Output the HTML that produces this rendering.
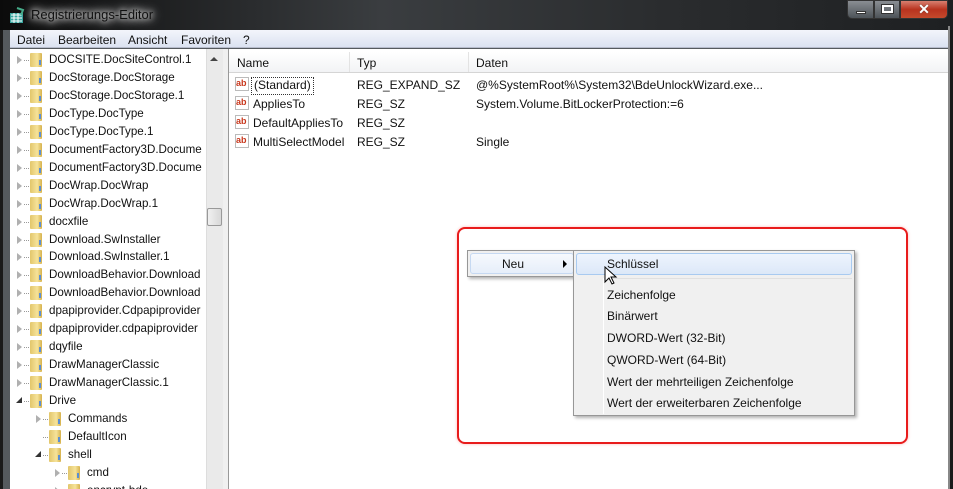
<!DOCTYPE html>
<html><head><meta charset="utf-8"><style>
*{margin:0;padding:0;box-sizing:border-box}
html{width:953px;height:489px;overflow:hidden}
body{width:953px;height:489px;overflow:hidden;background:#1a1a1a;font-family:"Liberation Sans",sans-serif;font-size:12px;color:#111;position:relative}
.title{position:absolute;left:0;top:0;width:953px;height:30px;background:linear-gradient(90deg,#0b0b0b 0,#3a3d40 40%,#2a2c2e 70%,#1e2022 100%)}
.title .t{position:absolute;left:31px;top:7px;color:#111;font-size:13px;text-shadow:0 0 6px #fff,0 0 10px #fff,0 0 14px #ccc}
.frame{position:absolute;left:3px;top:26px;width:947px;height:463px;background:#555a5e}
.menu{position:absolute;left:10px;top:30px;width:939px;height:18px;background:linear-gradient(#f3f5fb,#dbe2f1);border-bottom:1px solid #b6bccc}
.menu span{position:absolute;top:3px;font-size:12px}
.tree{position:absolute;left:10px;top:49px;width:197px;height:440px;background:#fff;overflow:hidden}
.sb{position:absolute;left:206px;top:49px;width:17px;height:440px;background:#eaeaea;border-left:1px solid #ddd}
.thumb{position:absolute;left:207px;top:208px;width:15px;height:18px;background:linear-gradient(90deg,#f0f0f0,#d8d8d8);border:1px solid #999;border-radius:2px}
.split{position:absolute;left:223px;top:49px;width:6px;height:440px;background:#f0f0f0;border-right:1px solid #999}
.right{position:absolute;left:229px;top:49px;width:719px;height:440px;background:#fff}
.rframe{position:absolute;left:948px;top:26px;width:2px;height:463px;background:#888}
.hdr{position:absolute;left:229px;top:52px;width:719px;height:21px;background:linear-gradient(#fff,#f2f3f5);border-bottom:1px solid #d5d5d5}
.hdr span{position:absolute;top:4px}
.row{position:absolute;height:18px;white-space:nowrap}
.tree .row{font-size:11.6px}
.tri{position:absolute;width:0;height:0;border-top:4px solid transparent;border-bottom:4px solid transparent;border-left:5px solid #b0b0b0}
.fold{position:absolute;width:12px;height:14px;background:linear-gradient(90deg,#e2c66b,#f6e39a 60%,#d6b24d);border-radius:1px}
.fold:after{content:"";position:absolute;right:1px;top:7px;width:2px;height:5px;background:#5b8fd4}
.ab{position:absolute;left:235px;width:14px;height:14px;border:1px solid #bbb;background:#fff;color:#c8371c;font-weight:bold;font-size:9px;line-height:10px;text-align:left}
.red{position:absolute;left:457px;top:227px;width:451px;height:217px;border:2px solid #e81c1c;border-radius:8px;background:#fff;box-shadow:0 0 3px #fbb}
.m1{position:absolute;left:467px;top:250px;width:108px;height:27px;background:#f0f0f0;border:1px solid #979797;box-shadow:2px 2px 3px rgba(0,0,0,.3)}
.m1 .hl{position:absolute;left:2px;top:2px;width:104px;height:21px;border:1px solid #c6d9f2;border-radius:3px;background:linear-gradient(#f6f9fd,#e6eefa)}
.m2{position:absolute;left:573px;top:250px;width:282px;height:166px;background:#f0f0f0;border:1px solid #979797;box-shadow:2px 2px 3px rgba(0,0,0,.3)}
.m2 .hl{position:absolute;left:2px;top:2px;width:276px;height:22px;border:1px solid #a8caf0;border-radius:3px;background:linear-gradient(#eef4fd,#dce8f8)}
.m2 .gut{position:absolute;left:29px;top:27px;width:1px;height:136px;background:#e0e0e0;border-right:1px solid #fff}
.m2 .sep{position:absolute;left:30px;top:27px;width:248px;height:1px;background:#e0e0e0}
.m2 span{position:absolute;left:33px}
</style></head><body>
<div class="frame"></div>
<div class="title"><svg style="position:absolute;left:9px;top:7px" width="17" height="17"><rect x="1" y="6" width="13" height="10" fill="#3aa6a0"/><path d="M2 8h11M2 11h11M2 14h11M5 6v10M9 6v10" stroke="#fff" stroke-width="1"/><path d="M8 1l6 2-2 5" stroke="#4a8" stroke-width="2" fill="none"/></svg><span class="t">Registrierungs-Editor</span>
<div style="position:absolute;left:847px;top:0;width:27px;height:19px;background:linear-gradient(#8a8e93,#4d5358);border:1px solid #333;border-radius:0 0 0 5px"><div style="position:absolute;left:8px;top:10px;width:10px;height:3px;background:#fff;border:1px solid #333"></div></div>
<div style="position:absolute;left:874px;top:0;width:26px;height:19px;background:linear-gradient(#8a8e93,#4d5358);border:1px solid #333"><div style="position:absolute;left:7px;top:4px;width:11px;height:8px;border:2px solid #fff;outline:1px solid #333"></div></div>
<div style="position:absolute;left:900px;top:0;width:48px;height:19px;background:linear-gradient(#d88070,#b8331f 50%,#c44a2c);border:1px solid #333;border-radius:0 0 5px 0;color:#fff;font-weight:bold;font-size:14px;text-align:center;line-height:17px;text-shadow:0 0 1px #333">✕</div>
</div>
<div class="menu"><span style="left:7px">Datei</span><span style="left:48px">Bearbeiten</span><span style="left:118px">Ansicht</span><span style="left:171px">Favoriten</span><span style="left:233px">?</span></div>
<div class="tree" id="tr"></div>
<div class="sb"></div><div style="position:absolute;left:210px;top:57px;border-left:4px solid transparent;border-right:4px solid transparent;border-bottom:4px solid #444"></div>
<div class="thumb"></div>
<div class="split"></div>
<div class="right"></div>
<div class="rframe"></div>
<div class="hdr"><span style="left:8px">Name</span><span style="left:128px">Typ</span><span style="left:247px">Daten</span><div style="position:absolute;left:120px;top:0;width:1px;height:20px;background:#e3e3e3"></div><div style="position:absolute;left:239px;top:0;width:1px;height:20px;background:#e3e3e3"></div></div>

<div class="ab" style="top:77px">ab</div><div class="row" style="left:251px;top:77px;border:1px dotted #333;padding:0 2px">(Standard)</div>
<div class="row" style="left:357px;top:78px">REG_EXPAND_SZ</div><div class="row" style="left:476px;top:78px">@%SystemRoot%\System32\BdeUnlockWizard.exe...</div>
<div class="ab" style="top:96px">ab</div><div class="row" style="left:253px;top:97px">AppliesTo</div><div class="row" style="left:357px;top:97px">REG_SZ</div><div class="row" style="left:476px;top:97px">System.Volume.BitLockerProtection:=6</div>
<div class="ab" style="top:115px">ab</div><div class="row" style="left:253px;top:116px">DefaultAppliesTo</div><div class="row" style="left:357px;top:116px">REG_SZ</div>
<div class="ab" style="top:134px">ab</div><div class="row" style="left:253px;top:135px">MultiSelectModel</div><div class="row" style="left:357px;top:135px">REG_SZ</div><div class="row" style="left:476px;top:135px">Single</div>

<div class="red"></div>
<div class="m1"><div class="hl"></div><span style="position:absolute;left:34px;top:6px">Neu</span><div style="position:absolute;left:95px;top:9px;border-top:4px solid transparent;border-bottom:4px solid transparent;border-left:4px solid #000"></div></div>
<div class="m2"><div class="hl"></div><div class="gut"></div><div class="sep"></div>
<span style="top:6px">Schlüssel</span><span style="top:37px">Zeichenfolge</span><span style="top:58px">Binärwert</span><span style="top:80px">DWORD-Wert (32-Bit)</span><span style="top:102px">QWORD-Wert (64-Bit)</span><span style="top:124px">Wert der mehrteiligen Zeichenfolge</span><span style="top:145px">Wert der erweiterbaren Zeichenfolge</span></div>
<svg style="position:absolute;left:604px;top:266px" width="14" height="20"><path d="M1 1v15l4-4 3 6 2-1-3-6h5z" fill="#fff" stroke="#000"/></svg>
<script>
var items=[["DOCSITE.DocSiteControl.1",0,1],["DocStorage.DocStorage",0,1],["DocStorage.DocStorage.1",0,1],["DocType.DocType",0,1],["DocType.DocType.1",0,1],["DocumentFactory3D.Docume",0,1],["DocumentFactory3D.Docume",0,1],["DocWrap.DocWrap",0,1],["DocWrap.DocWrap.1",0,1],["docxfile",0,1],["Download.SwInstaller",0,1],["Download.SwInstaller.1",0,1],["DownloadBehavior.Download",0,1],["DownloadBehavior.Download",0,1],["dpapiprovider.Cdpapiprovider",0,1],["dpapiprovider.cdpapiprovider",0,1],["dqyfile",0,1],["DrawManagerClassic",0,1],["DrawManagerClassic.1",0,1],["Drive",0,2],["Commands",1,1],["DefaultIcon",1,0],["shell",1,2],["cmd",2,1],["encrypt-bde",2,1]];
var h="";items.forEach(function(it,i){var y=2+i*17.95,x=it[1]*19;
if(it[2]==1)h+='<div class="tri" style="left:'+(7+x)+'px;top:'+(y+5)+'px"></div>';
if(it[2]==2)h+='<div style="position:absolute;left:'+(6+x)+'px;top:'+(y+5)+'px;border-left:6px solid transparent;border-bottom:6px solid #333"></div>';
h+='<div style="position:absolute;left:'+(14+x)+'px;top:'+(y+9)+'px;width:5px;border-top:1px dotted #999"></div>';
h+='<div class="fold" style="left:'+(20+x)+'px;top:'+(y+2)+'px"></div>';
h+='<div class="row" style="left:'+(39+x)+'px;top:'+(y+2)+'px">'+it[0]+'</div>';});
document.getElementById("tr").innerHTML=h;
</script>
</body></html>
